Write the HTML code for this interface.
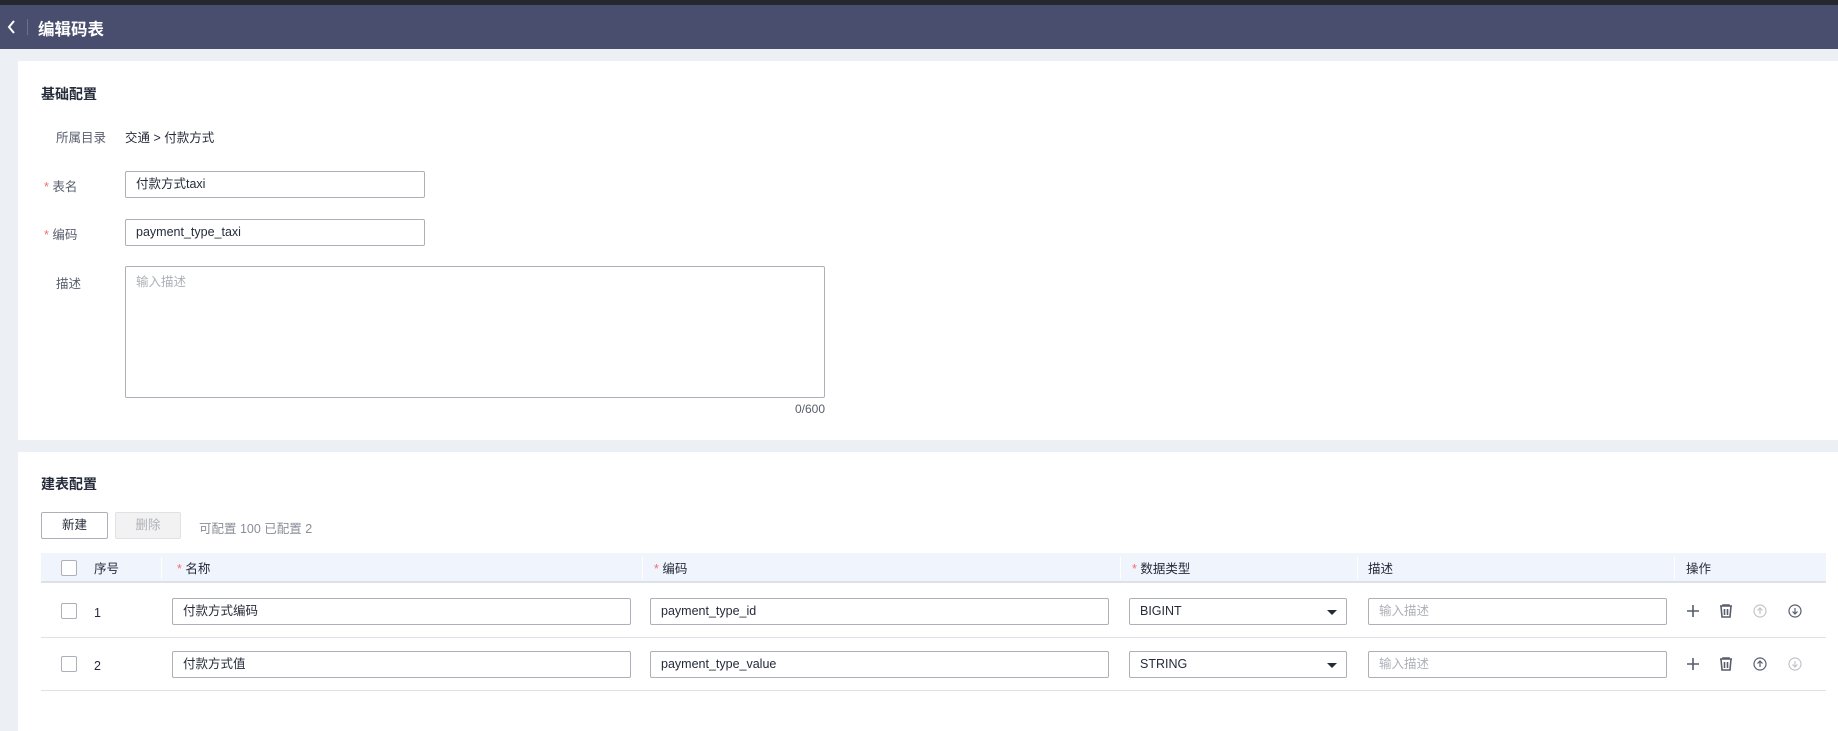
<!DOCTYPE html>
<html><head><meta charset="utf-8"><style>
*{box-sizing:border-box;margin:0;padding:0}
body{width:1838px;height:731px;overflow:hidden;background:#eceff3;font-family:"Liberation Sans","Noto Sans CJK SC",sans-serif;font-size:12.5px;color:#252b3a;position:relative}
.a{position:absolute}
.top{left:0;top:0;width:1838px;height:5px;background:#25272f}
.hd{left:0;top:5px;width:1838px;height:44px;background:#494e6f}
.card{background:#fff;left:18px;width:1820px}
.inp{position:absolute;border:1px solid #adb0b8;border-radius:2px;height:27px;line-height:25px;padding-left:10px;background:#fff;font-size:12.5px;white-space:nowrap;overflow:hidden}
.ph{color:#adb0b8}
.lbl{position:absolute;color:#575d6c}
.star{color:#f66f6a}
.cb{position:absolute;width:16px;height:16px;border:1px solid #adb0b8;border-radius:2px;background:#fff}
.sep{position:absolute;top:557px;width:1px;height:22px;background:#fff}
.btn{position:absolute;border:1px solid #adb0b8;border-radius:2px;text-align:center;line-height:25px;font-size:12.5px}
</style></head><body>
<div class="a top"></div>
<div class="a hd">
<svg class="a" style="left:6px;top:14px" width="12" height="16" viewBox="0 0 12 16"><path d="M8 2 L3 8 L8 14" fill="none" stroke="#fff" stroke-width="2"/></svg>
<div class="a" style="left:27px;top:14px;width:1px;height:16px;background:#6b7090"></div>
<div class="a" style="left:38px;top:11px;color:#fff;font-size:16.5px;font-weight:bold">编辑码表</div>
</div>
<div class="a card" style="top:61px;height:379px"></div>
<div class="a" style="left:41px;top:84px;font-size:14px;font-weight:bold">基础配置</div>
<div class="lbl" style="left:56px;top:127px">所属目录</div>
<div class="a" style="left:125px;top:127px">交通 &gt; 付款方式</div>
<div class="lbl" style="left:44px;top:176px"><span class="star">* </span>表名</div>
<div class="inp" style="left:125px;top:171px;width:300px">付款方式taxi</div>
<div class="lbl" style="left:44px;top:224px"><span class="star">* </span>编码</div>
<div class="inp" style="left:125px;top:219px;width:300px">payment_type_taxi</div>
<div class="lbl" style="left:56px;top:273px">描述</div>
<div class="inp ph" style="left:125px;top:266px;width:700px;height:132px;line-height:16px;padding-top:7px">输入描述</div>
<div class="a" style="left:780px;top:402px;width:45px;text-align:right;color:#575d6c;font-size:12px">0/600</div>

<div class="a card" style="top:452px;height:279px"></div>
<div class="a" style="left:41px;top:474px;font-size:14px;font-weight:bold">建表配置</div>
<div class="btn" style="left:41px;top:512px;width:67px;height:27px">新建</div>
<div class="btn" style="left:115px;top:512px;width:66px;height:27px;background:#f2f2f2;border-color:#dfe1e6;color:#b0b2b8">删除</div>
<div class="a" style="left:199px;top:518px;color:#8a8e99">可配置 100 已配置 2</div>

<div class="a" style="left:41px;top:553px;width:1785px;height:30px;background:#f0f4fc;border-bottom:2px solid #dfe1e6"></div>
<div class="sep" style="left:161px"></div><div class="sep" style="left:642px"></div><div class="sep" style="left:1120px"></div><div class="sep" style="left:1357px"></div><div class="sep" style="left:1674px"></div>
<div class="cb" style="left:61px;top:560px"></div>
<div class="a" style="left:94px;top:558px">序号</div>
<div class="a" style="left:177px;top:558px"><span class="star">* </span>名称</div>
<div class="a" style="left:654px;top:558px"><span class="star">* </span>编码</div>
<div class="a" style="left:1132px;top:558px"><span class="star">* </span>数据类型</div>
<div class="a" style="left:1368px;top:558px">描述</div>
<div class="a" style="left:1686px;top:558px">操作</div>

<div class="a" style="left:41px;top:637px;width:1785px;height:1px;background:#dfe1e6"></div>
<div class="a" style="left:41px;top:690px;width:1785px;height:1px;background:#dfe1e6"></div>

<div class="cb" style="left:61px;top:603px"></div>
<div class="a" style="left:94px;top:606px">1</div>
<div class="inp" style="left:172px;top:598px;width:459px">付款方式编码</div>
<div class="inp" style="left:650px;top:598px;width:459px">payment_type_id</div>
<div class="inp" style="left:1129px;top:598px;width:218px">BIGINT<span class="a" style="right:9px;top:11px;border:5px solid transparent;border-top:5px solid #252b3a;border-bottom:0"></span></div>
<div class="inp ph" style="left:1368px;top:598px;width:299px">输入描述</div>

<div class="cb" style="left:61px;top:656px"></div>
<div class="a" style="left:94px;top:659px">2</div>
<div class="inp" style="left:172px;top:651px;width:459px">付款方式值</div>
<div class="inp" style="left:650px;top:651px;width:459px">payment_type_value</div>
<div class="inp" style="left:1129px;top:651px;width:218px">STRING<span class="a" style="right:9px;top:11px;border:5px solid transparent;border-top:5px solid #252b3a;border-bottom:0"></span></div>
<div class="inp ph" style="left:1368px;top:651px;width:299px">输入描述</div>

<svg class="a" style="left:1686px;top:603px" width="140" height="70" viewBox="0 0 140 70">
<g fill="none" stroke-width="1.6">
<path d="M7 2v12M1 8h12" stroke="#575d6c"/>
<path d="M34 3h12M37 3v-1h6v1M35 3l1 11h8l1-11M38.5 6v6M41.5 6v6" stroke="#575d6c"/>
<circle cx="74" cy="8" r="6" stroke="#c2c4c8" stroke-width="1.2"/><path d="M74 11V5M71.5 7.5L74 5l2.5 2.5" stroke="#c2c4c8" stroke-width="1.2"/>
<circle cx="109" cy="8" r="6" stroke="#575d6c" stroke-width="1.2"/><path d="M109 5v6M106.5 8.5L109 11l2.5-2.5" stroke="#575d6c" stroke-width="1.2"/>
<g transform="translate(0,53)">
<path d="M7 2v12M1 8h12" stroke="#575d6c"/>
<path d="M34 3h12M37 3v-1h6v1M35 3l1 11h8l1-11M38.5 6v6M41.5 6v6" stroke="#575d6c"/>
<circle cx="74" cy="8" r="6" stroke="#575d6c" stroke-width="1.2"/><path d="M74 11V5M71.5 7.5L74 5l2.5 2.5" stroke="#575d6c" stroke-width="1.2"/>
<circle cx="109" cy="8" r="6" stroke="#c2c4c8" stroke-width="1.2"/><path d="M109 5v6M106.5 8.5L109 11l2.5-2.5" stroke="#c2c4c8" stroke-width="1.2"/>
</g></g></svg>
</body></html>
